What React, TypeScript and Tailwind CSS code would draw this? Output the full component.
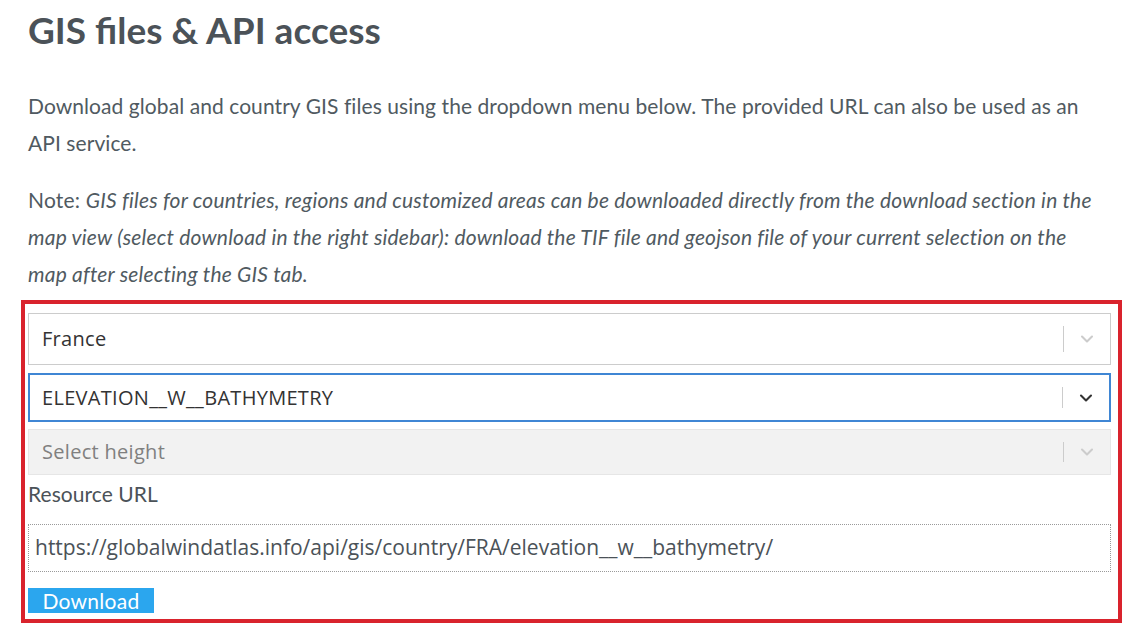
import { ChevronDown } from 'lucide-react';

type SelectBoxProps = {
  value: string;
  variant: 'normal' | 'focused' | 'disabled';
  height: string;
};

function SelectBox({ value, variant, height }: SelectBoxProps) {
  const box =
    variant === 'focused'
      ? 'border-2 border-[#3f86d4] bg-white'
      : variant === 'disabled'
        ? 'border border-[#e6e6e6] bg-[#f2f2f2]'
        : 'border border-[#cccccc] bg-white';
  const text =
    variant === 'disabled' ? 'text-[#808080]' : 'text-[#333333]';
  const chevron = variant === 'focused' ? 'text-[#333333]' : 'text-[#cccccc]';

  return (
    <div className={`flex items-center ${box} ${height}`}>
      <div
        className={`flex-1 ${variant === 'focused' ? 'pl-[12px]' : 'pl-[13px]'} text-[20px] tracking-[0.3px] ${text}`}
        style={{ fontFamily: '"Open Sans", sans-serif' }}
      >
        {value}
      </div>
      <div className="w-px self-stretch my-[12px] bg-[#cccccc]" />
      <div className="w-[46px] flex items-center justify-center">
        <ChevronDown className={`w-[20px] h-[20px] ${chevron}`} strokeWidth={2.5} />
      </div>
    </div>
  );
}

export default function App() {
  return (
    <div
      className="min-h-screen bg-white pl-[21px] pr-[17px] pt-[2px] text-[#4b5258]"
      style={{ fontFamily: 'Lato, "Open Sans", sans-serif' }}
    >
      <h1 className="px-[7px] text-[37px] font-bold leading-[56px]">GIS files &amp; API access</h1>

      <p className="pl-[7px] pr-[12px] mt-[29px] text-[21px] tracking-[0.07px] leading-[37px] text-[#505a61]">
        Download global and country GIS files using the dropdown menu below. The provided URL can
        also be used as an API service.
      </p>

      <p className="pl-[7px] pr-[12px] mt-[20px] text-[21px] tracking-[0.2px] leading-[37px] text-[#505a61]">
        Note:{' '}
        <i>
          GIS files for countries, regions and customized areas can be downloaded directly from the
          download section in the map view (select download in the right sidebar): download the TIF
          file and geojson file of your current selection on the map after selecting the GIS tab.
        </i>
      </p>

      {/* Highlighted download box */}
      <div className="mt-[8px] border-[4px] border-[#d9232d] pl-[3px] pr-[7px] pt-[9px] pb-[6px] flex flex-col">
        <SelectBox value="France" variant="normal" height="h-[52px]" />
        <div className="mt-[8px]">
          <SelectBox value="ELEVATION__W__BATHYMETRY" variant="focused" height="h-[49px]" />
        </div>
        <div className="mt-[7px]">
          <SelectBox value="Select height" variant="disabled" height="h-[46px]" />
        </div>

        <label className="mt-[4px] text-[21px] tracking-[0.05px] leading-[30px] text-[#4b5258]">
          Resource URL
        </label>

        <div
          className="mt-[15px] h-[48px] flex items-center border border-dotted border-[#9a9a9a] pl-[6px] text-[21px] text-[#4b5258]"
          style={{ fontFamily: '"Open Sans", sans-serif' }}
        >
          https://globalwindatlas.info/api/gis/country/FRA/elevation__w__bathymetry/
        </div>

        <div className="mt-[16px]">
          <button className="h-[25px] w-[126px] bg-[#2ba6ee] text-white text-[21px] tracking-[0.3px] leading-[25px] flex items-center justify-center">
            Download
          </button>
        </div>
      </div>
    </div>
  );
}
